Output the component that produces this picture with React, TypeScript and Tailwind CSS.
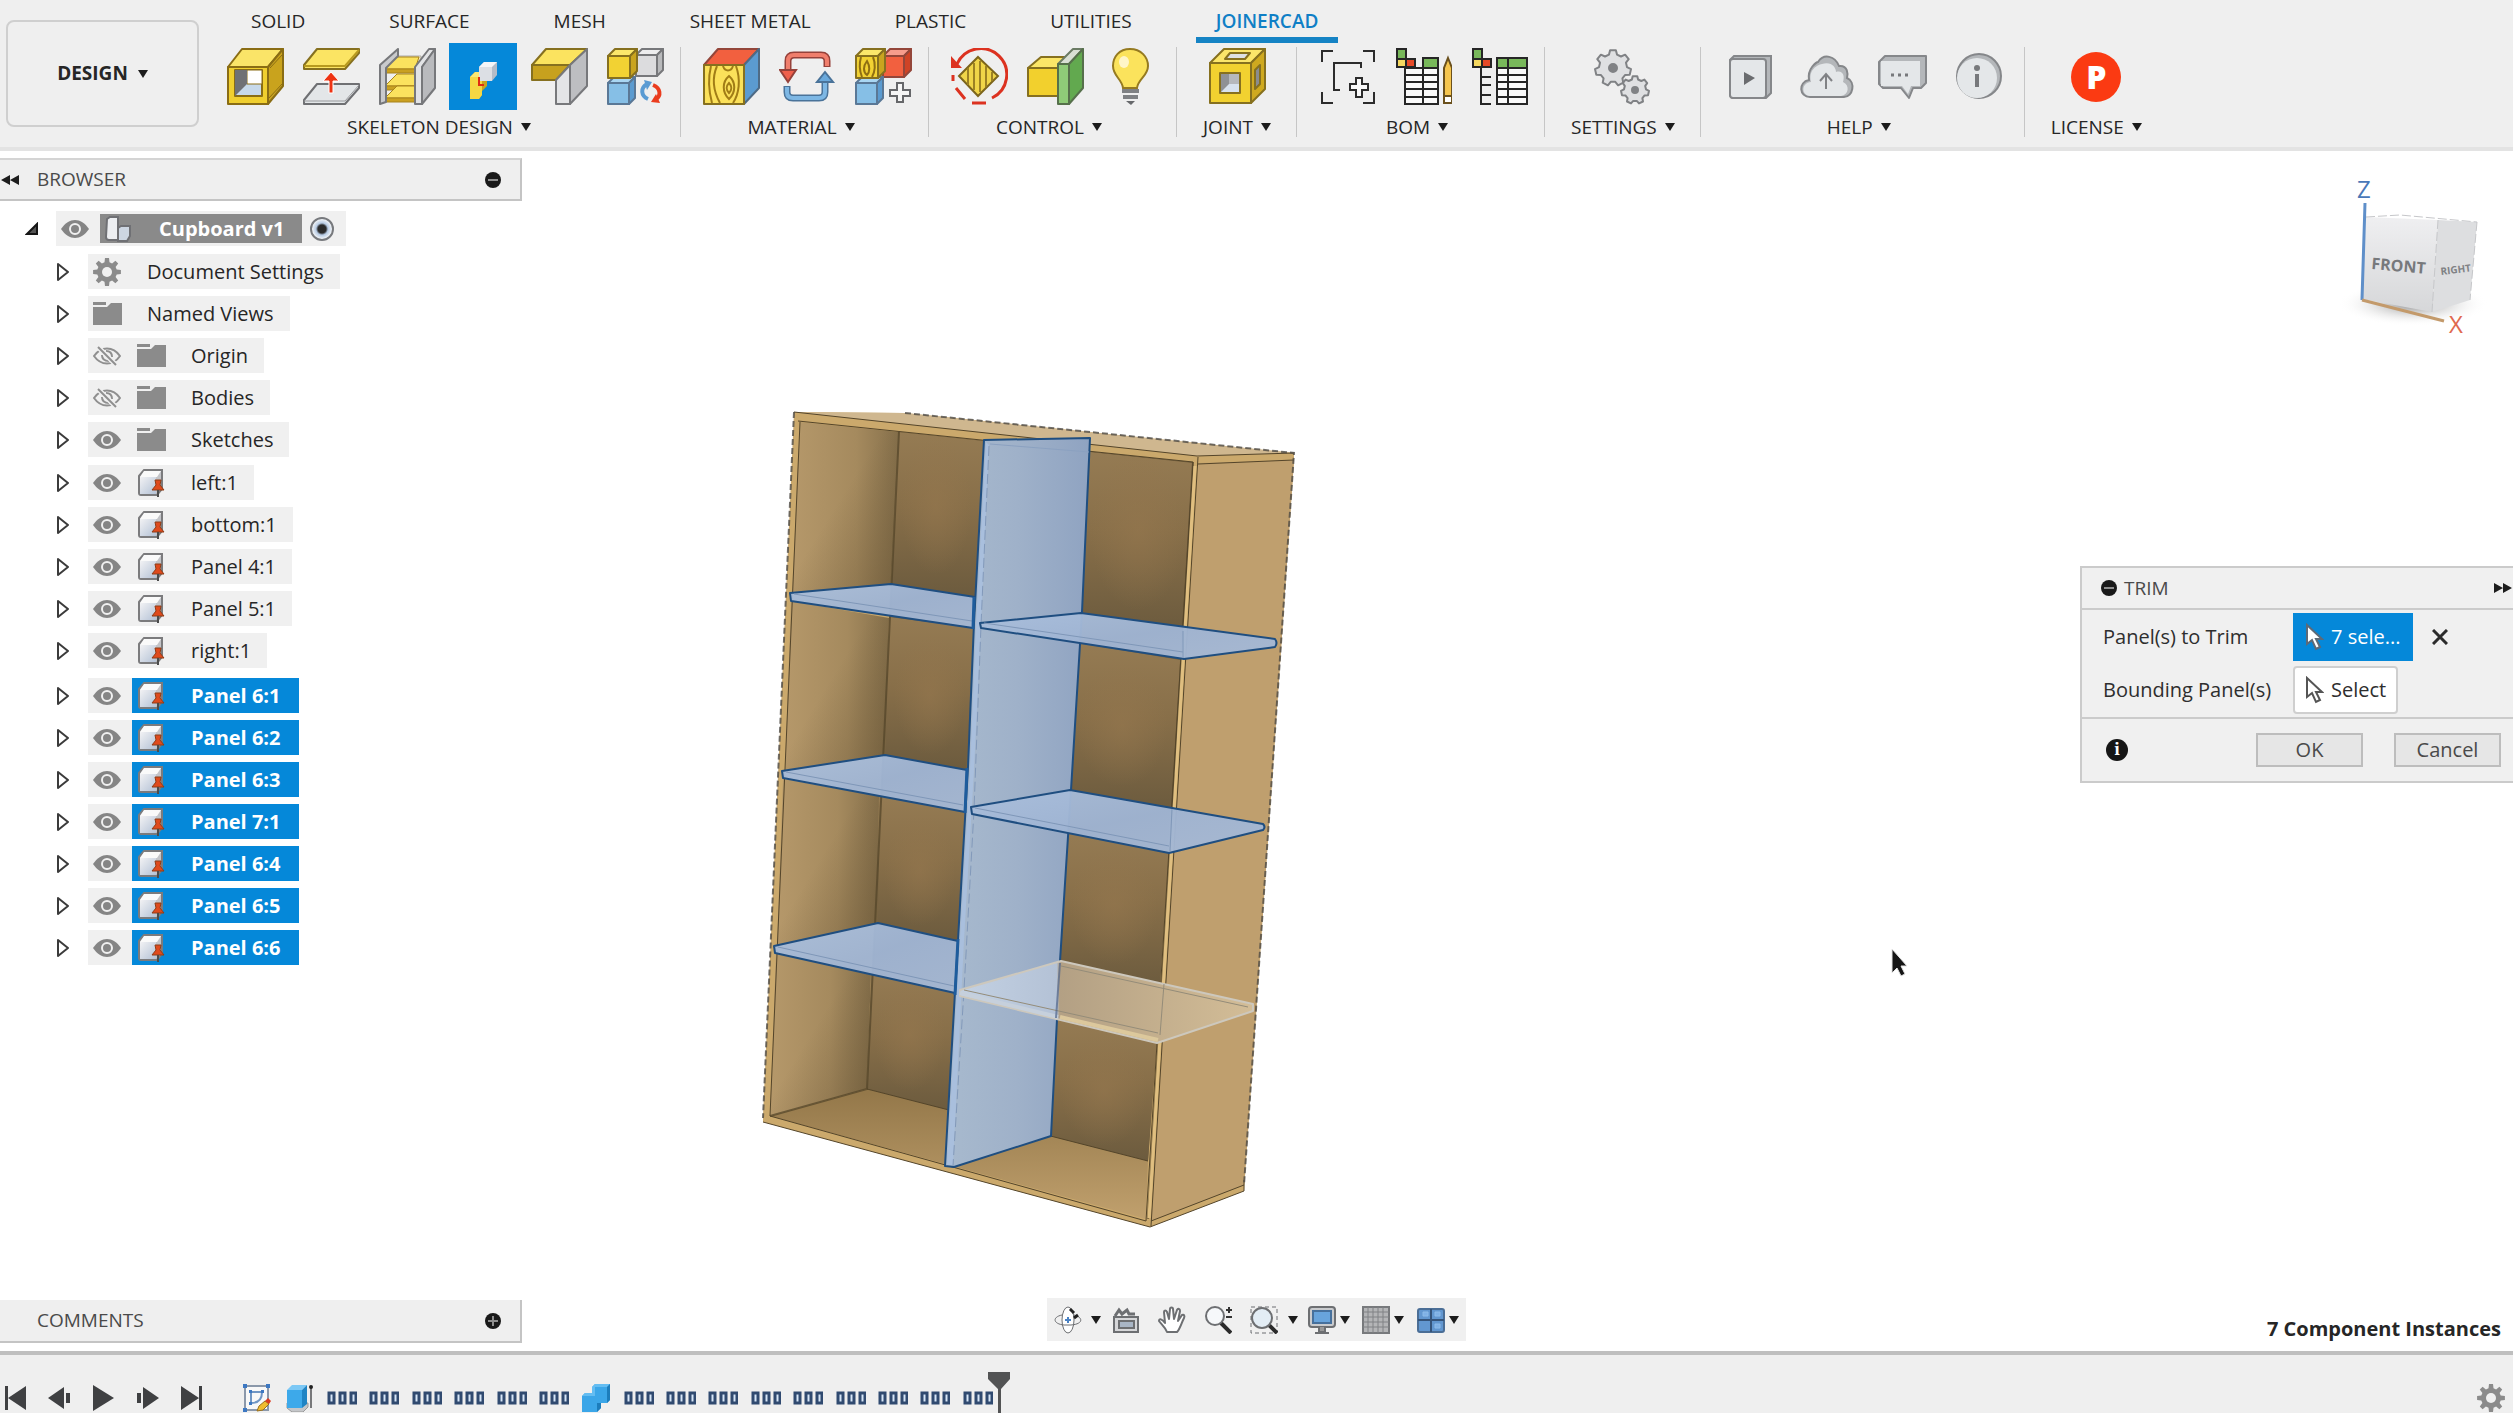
import type { ReactNode } from "react";

import clsx from "clsx";

/* ---------- shared drawing pieces ---------- */

interface CubeProps {
  x: number;
  y: number;
  size: number;
  depth: number;
  front: string;
  top: string;
  side: string;
  stroke: string;
}

const Cube = ({ x, y, size, depth, front, top, side, stroke }: CubeProps) => {
  const w = size - depth;
  return (
    <g stroke={stroke} strokeWidth="2" strokeLinejoin="round">
      <path d={`M${x} ${y + depth}L${x + depth} ${y}H${x + size}L${x + w} ${y + depth}Z`} fill={top} />
      <path d={`M${x + w} ${y + depth}L${x + size} ${y}V${y + w}L${x + w} ${y + size}Z`} fill={side} />
      <path d={`M${x} ${y + depth}H${x + w}V${y + size}H${x}Z`} fill={front} />
    </g>
  );
};

const YELLOW = { front: "#f2d233", top: "#fbe76b", side: "#c9a41f", stroke: "#86701f" };
const GRAY = { front: "#dcdcde", top: "#ededee", side: "#b9babc", stroke: "#77787b" };
const BLUE = { front: "#86bfe6", top: "#a9d6f2", side: "#5b9bd0", stroke: "#5a7896" };
const RED = { front: "#f2603f", top: "#f79c8c", side: "#cf4326", stroke: "#94463a" };

const Tool = ({ children }: { children: ReactNode }) => (
  <svg viewBox="0 0 57 57" className="size-[57px]" fill="none">
    {children}
  </svg>
);

const Caret = () => (
  <svg viewBox="0 0 10 8" className="h-2 w-[10px] shrink-0" fill="#1c1c1c">
    <path d="M0 0h10L5 8z" />
  </svg>
);

/* ---------- toolbar icons ---------- */

const BoxIcon = () => (
  <Tool>
    <g stroke="#8a6d14" strokeWidth="2" strokeLinejoin="round">
      <path d="M1 19L15 1H56L41 19Z" fill="#fae468" />
      <path d="M41 19L56 1V38L41 56Z" fill="#c9a31d" />
      <path d="M1 19H41V56H1Z" fill="#f0cf2f" />
      <path d="M8 22H35V48H8Z" fill="#c7d9ea" />
      <path d="M20 22H35V36H20Z" fill="#fff" strokeWidth="1" />
    </g>
    <path d="M8 48L20 36V22H8Z" fill="#6f7175" />
    <path d="M42 50L55 36M43 20L55 7" stroke="#8a6d14" strokeWidth="1" />
  </Tool>
);

const OffsetIcon = () => (
  <Tool>
    <path d="M14 1H56V5L42 21H1V17Z" fill="#fbe463" stroke="#86701f" strokeWidth="2" strokeLinejoin="round" />
    <path d="M1 18H42L56 2" stroke="#b89a1e" strokeWidth="2" />
    <path d="M14 36H56V40L42 56H1V52Z" fill="#e3e6e8" stroke="#6f7073" strokeWidth="2" strokeLinejoin="round" />
    <path d="M1 53H42L56 37" stroke="#98999c" strokeWidth="1" />
    <path d="M26 45V33H20L28 24L36 33H30V45Z" fill="#ee3313" stroke="#fff" strokeWidth="1" />
  </Tool>
);

const ShelvesIcon = () => (
  <Tool>
    <path d="M18 8H42V14H18Z" fill="#f2e7c0" stroke="#aaa" />
    {[9, 26, 38].map((y) => (
      <g key={y} stroke="#a8831c" strokeWidth="1" strokeLinejoin="round">
        <path d={`M6 ${y + 12}L18 ${y}H40L36 ${y + 12}Z`} fill="#fbe25e" />
        <path d={`M6 ${y + 12}H36V${y + 16}H6Z`} fill="#caa021" />
      </g>
    ))}
    <g stroke="#77787b" strokeWidth="2" strokeLinejoin="round">
      <path d="M1 17L19 1V8L7 20V54L1 56Z" fill="#c9cacd" />
      <path d="M36 19L50 1H56L43 19V56H36Z" fill="#e2e3e5" />
      <path d="M43 19L56 1V40L43 56Z" fill="#b9babd" />
    </g>
  </Tool>
);

const TrimIcon = () => (
  <Tool>
    <path d="M15 29L20 24H32V38L27 43V47L24 51H15Z" fill="#c9a31d" />
    <path d="M15 29H27V47L24 51H15Z" fill="#f5d743" />
    <path d="M15 29L20 24H32L27 29Z" fill="#fbe873" />
    <path d="M24 19L29 14H42V27L37 33H24Z" fill="#b3bcc8" />
    <path d="M24 19H37V33H24Z" fill="#dcdfe4" />
    <path d="M24 19L29 14H42L37 19Z" fill="#f4f5f7" />
    <path d="M24 29V37H29" stroke="#e02b12" strokeWidth="2" />
  </Tool>
);

const CornerIcon = () => (
  <Tool>
    <g strokeWidth="2" strokeLinejoin="round">
      <path d="M1 17L15 1H56L39 17Z" fill="#fbe35f" stroke="#86701f" />
      <path d="M1 17H39L25 32H1Z" fill="#c7a11e" stroke="#86701f" />
      <path d="M25 32L39 17V56H25Z" fill="#e3e4e6" stroke="#77787b" />
      <path d="M39 17L56 1V38L39 56Z" fill="#bdbec1" stroke="#77787b" />
    </g>
  </Tool>
);

const ReplaceIcon = () => (
  <Tool>
    <Cube x={29} y={1} size={27} depth={6} {...GRAY} />
    <Cube x={1} y={29} size={27} depth={6} {...BLUE} />
    <Cube x={1} y={1} size={29} depth={7} {...YELLOW} />
    <path d="M41 51C34 48 33 40 40 36" stroke="#5a9bd3" strokeWidth="4" />
    <path d="M37 32L45 34L40 42Z" fill="#5a9bd3" />
    <path d="M46 37C54 40 54 48 49 51" stroke="#ea3c1e" strokeWidth="4" />
    <path d="M53 55L44 54L49 46Z" fill="#ea3c1e" />
  </Tool>
);

const WoodIcon = () => (
  <Tool>
    <g strokeWidth="2" strokeLinejoin="round">
      <path d="M1 17L15 1H56L41 17Z" fill="#f2603f" stroke="#94463a" />
      <path d="M41 17L56 1V40L41 56Z" fill="#5b9bd0" stroke="#4f6b85" />
      <path d="M1 17H41V56H1Z" fill="#fbe15a" stroke="#86701f" />
    </g>
    <g stroke="#a17d16" strokeWidth="2">
      <path d="M8 18C5 30 6 44 9 55M14 18C8 32 12 46 17 55M33 18C38 32 36 46 30 55M20 18C22 24 28 24 30 18" />
      <path d="M26 28C19 34 19 44 26 51C33 44 33 34 26 28Z" />
      <path d="M26 35C23 38 23 42 26 45C29 42 29 38 26 35Z" />
    </g>
  </Tool>
);

const SwapIcon = () => (
  <Tool>
    <path d="M48 19V13Q48 7 42 7H15Q9 7 9 13V22" stroke="#96413a" strokeWidth="7" />
    <path d="M48 18V13Q48 7 42 7H15Q9 7 9 13V22" stroke="#f07e6c" strokeWidth="4" />
    <path d="M1 22H17L9 34Z" fill="#f0604c" stroke="#96413a" strokeWidth="2" />
    <path d="M8 38V44Q8 50 14 50H40Q46 50 46 44V34" stroke="#4a7399" strokeWidth="7" />
    <path d="M8 39V44Q8 50 14 50H40Q46 50 46 44V34" stroke="#7db7e4" strokeWidth="4" />
    <path d="M38 34H54L46 24Z" fill="#6aa9dc" stroke="#4a7399" strokeWidth="2" />
  </Tool>
);

const AddMaterialIcon = () => (
  <Tool>
    <Cube x={28} y={1} size={28} depth={7} {...RED} />
    <Cube x={1} y={29} size={27} depth={6} {...BLUE} />
    <Cube x={1} y={1} size={29} depth={7} {...YELLOW} />
    <path d="M6 9C4 16 5 24 7 29M18 9C21 16 20 24 17 29M12 13C8 18 8 24 12 27C15 24 15 18 12 13Z" stroke="#8f6f12" strokeWidth="2" />
    <path d="M42 35H48V42H55V48H48V54H42V48H35V42H42Z" fill="#f6f6f6" stroke="#66676a" strokeWidth="2" />
  </Tool>
);

const RotateGrainIcon = () => (
  <Tool>
    <path d="M6 16A26 26 0 1 1 41 50" stroke="#dc3220" strokeWidth="3" />
    <path d="M35 55H21M14 51L5 40M2 33V27" stroke="#dc3220" strokeWidth="3" />
    <path d="M0 8V20H11Z" fill="#dc3220" />
    <path d="M27 9L47 28L27 48L8 28Z" fill="#f0d548" stroke="#7c651b" strokeWidth="2" />
    <path d="M17 20V37M23 15V42M29 13V44M35 18V39M41 24V33" stroke="#9c8123" strokeWidth="2" />
  </Tool>
);

const ControlIcon = () => (
  <Tool>
    <g strokeWidth="2" strokeLinejoin="round">
      <path d="M1 20L14 9H38L32 20Z" fill="#fbe668" stroke="#86701f" />
      <path d="M1 20H32V48H1Z" fill="#f2d02d" stroke="#86701f" />
      <path d="M31 16L46 1H56L42 16Z" fill="#d9dfd4" stroke="#6b7b64" />
      <path d="M31 16H42V56H31Z" fill="#8fcb78" stroke="#56704b" />
      <path d="M42 16L56 1V40L42 56Z" fill="#62a94f" stroke="#56704b" />
    </g>
  </Tool>
);

const BulbIcon = () => (
  <Tool>
    <path d="M27 1C16 1 10 9 10 18C10 28 19 31 20 40H34C35 31 45 28 45 18C45 9 38 1 27 1Z" fill="#fbe35c" stroke="#957a20" strokeWidth="2" />
    <ellipse cx="21" cy="14" rx="5" ry="6" fill="#fff6c8" />
    <path d="M19 43H36M20 49H35" stroke="#7f8184" strokeWidth="4" />
    <path d="M23 53H32L28 57Z" fill="#66686b" />
  </Tool>
);

const JointIcon = () => (
  <Tool>
    <g stroke="#86701f" strokeWidth="2" strokeLinejoin="round">
      <path d="M1 15L15 1H56L42 15Z" fill="#fbe56a" />
      <path d="M42 15L56 1V41L42 55Z" fill="#cfa91f" />
      <path d="M1 15H42V55H1Z" fill="#f2d130" />
      <path d="M21 5H41L36 11H16Z" fill="#dfe0e2" />
      <path d="M46 22L51 17V36L46 41Z" fill="#8b8c8f" />
      <path d="M11 25H31V45H11Z" fill="#d8e2ee" />
    </g>
    <path d="M12 26H20V36L12 44Z" fill="#8f9195" />
    <path d="M20 26H30V36H20Z" fill="#b6b8bc" />
  </Tool>
);

const CaptureIcon = () => (
  <Tool>
    <g stroke="#2c2c2c" strokeWidth="2">
      <path d="M3 14V3H14M44 3H55V14M3 44V55H14M44 55H55V44" />
      <path d="M42 20V15H15V42H21" />
      <path d="M37 30H43V36H49V42H43V49H37V42H31V36H37Z" fill="#fafafa" />
    </g>
  </Tool>
);

const TableArt = ({ wide }: { wide: boolean }) => (
  <g stroke="#262626" strokeWidth="2">
    <path d="M2 1H11V11H2Z" fill="#78b85a" />
    <path d="M2 11H11V19H2Z" fill="#f5d860" />
    <path d="M11 11H20V19H11Z" fill="#e64a28" />
    {wide ? (
      <>
        <path d="M10 20V56H20M10 29H20M10 37H20M10 47H20" />
        <path d="M26 10H56V56H26Z" fill="#fafafa" />
        <path d="M26 10H56V20H26Z" fill="#78b85a" />
        <path d="M26 27H56M26 34H56M26 41H56M26 49H56M37 10V56" />
      </>
    ) : (
      <>
        <path d="M10 20H28V56H10Z" fill="#fafafa" />
        <path d="M28 10H43V56H28Z" fill="#fafafa" />
        <path d="M28 10H43V20H28Z" fill="#78b85a" />
        <path d="M10 27H43M10 34H43M10 41H43M10 49H43" />
        <path d="M53 10L57 20V55H49V20Z" fill="#f5c54e" stroke="#6a501c" />
        <path d="M49 48H57V55H49Z" fill="#fff" stroke="#6a501c" />
      </>
    )}
  </g>
);

const TableEditIcon = () => (
  <Tool>
    <TableArt wide={false} />
  </Tool>
);

const TableIcon = () => (
  <Tool>
    <TableArt wide />
  </Tool>
);

const cogPath = (cx: number, cy: number, outer: number, inner: number, teeth: number) => {
  const points: string[] = [];
  for (let i = 0; i < teeth; i++) {
    [-0.32, -0.18, 0.18, 0.32].forEach((offset, n) => {
      const angle = ((i + offset) / teeth) * Math.PI * 2 - Math.PI / 2;
      const r = n === 0 || n === 3 ? inner : outer;
      points.push(`${(cx + Math.cos(angle) * r).toFixed(1)} ${(cy + Math.sin(angle) * r).toFixed(1)}`);
    });
  }
  return `M${points.join("L")}Z`;
};

const CogsIcon = () => (
  <Tool>
    <g fill="#dfe0e2" stroke="#808285" strokeWidth="2" strokeLinejoin="round">
      <path d={cogPath(19, 20, 18, 14, 7)} />
      <circle cx="19" cy="20" r="4" fill="#808285" />
      <path d={cogPath(41, 42, 14, 11, 7)} />
      <circle cx="41" cy="42" r="3" fill="#808285" />
    </g>
  </Tool>
);

const PlayIcon = () => (
  <Tool>
    <path d="M12 8H49V45L44 50H12Q8 50 8 46V12Z" fill="#b4b7ba" stroke="#85878a" strokeWidth="2" />
    <rect x="8" y="11" width="36" height="39" rx="3" fill="#e4e7e9" stroke="#85878a" strokeWidth="2" />
    <path d="M22 24V37L33 30Z" fill="#6a6c6f" />
  </Tool>
);

const CloudIcon = () => (
  <Tool>
    <path d="M12 49C1 49 0 34 11 32C9 20 19 14 20 14C26 5 37 8 41 18C50 17 50 26 49 30C58 34 55 49 46 49Z" fill="#b4b7ba" stroke="#85878a" strokeWidth="2" />
    <path d="M12 48C3 47 3 35 13 34C10 22 19 17 24 16C33 13 38 19 38 24C45 22 47 28 45 34C52 37 51 47 43 48Z" fill="#e4e7e9" />
    <path d="M28 41V27M22 33L28 26L34 33" stroke="#808285" strokeWidth="2" />
  </Tool>
);

const ChatIcon = () => (
  <Tool>
    <path d="M11 8H52V35L47 40H39L35 50L27 40H9L5 36V14Z" fill="#b4b7ba" stroke="#85878a" strokeWidth="2" strokeLinejoin="round" />
    <path d="M7 13H46V38H37L34 46L28 38H7Z" fill="#e4e7e9" />
    <path d="M17 27H20M24 27H27M31 27H34" stroke="#77797c" strokeWidth="3" />
  </Tool>
);

const InfoIcon = () => (
  <Tool>
    <circle cx="29" cy="28" r="22" fill="#b4b7ba" stroke="#85878a" strokeWidth="2" />
    <circle cx="27" cy="30" r="20" fill="#e4e7e9" />
    <path d="M27 26V39" stroke="#77797c" strokeWidth="4" />
    <circle cx="27" cy="20" r="3" fill="#77797c" />
  </Tool>
);

const LicenseIcon = () => (
  <span className="flex size-[50px] items-center justify-center rounded-full bg-[#fb3a12] text-[32px] leading-none font-extrabold text-white">
    P
  </span>
);

/* ---------- toolbar ---------- */

const TABS = ["SOLID", "SURFACE", "MESH", "SHEET METAL", "PLASTIC", "UTILITIES", "JOINERCAD"];

interface ToolGroup {
  label: string;
  tools: { name: string; icon: ReactNode }[];
}

const GROUPS: ToolGroup[] = [
  {
    label: "SKELETON DESIGN",
    tools: [
      { name: "Box", icon: <BoxIcon /> },
      { name: "Offset", icon: <OffsetIcon /> },
      { name: "Shelves", icon: <ShelvesIcon /> },
      { name: "Trim", icon: <TrimIcon /> },
      { name: "Corner", icon: <CornerIcon /> },
      { name: "Replace", icon: <ReplaceIcon /> },
    ],
  },
  {
    label: "MATERIAL",
    tools: [
      { name: "Wood", icon: <WoodIcon /> },
      { name: "Swap", icon: <SwapIcon /> },
      { name: "Add material", icon: <AddMaterialIcon /> },
    ],
  },
  {
    label: "CONTROL",
    tools: [
      { name: "Grain", icon: <RotateGrainIcon /> },
      { name: "Side", icon: <ControlIcon /> },
      { name: "Hint", icon: <BulbIcon /> },
    ],
  },
  { label: "JOINT", tools: [{ name: "Joint", icon: <JointIcon /> }] },
  {
    label: "BOM",
    tools: [
      { name: "Capture", icon: <CaptureIcon /> },
      { name: "Edit table", icon: <TableEditIcon /> },
      { name: "Table", icon: <TableIcon /> },
    ],
  },
  { label: "SETTINGS", tools: [{ name: "Settings", icon: <CogsIcon /> }] },
  {
    label: "HELP",
    tools: [
      { name: "Video", icon: <PlayIcon /> },
      { name: "Upload", icon: <CloudIcon /> },
      { name: "Feedback", icon: <ChatIcon /> },
      { name: "About", icon: <InfoIcon /> },
    ],
  },
  { label: "LICENSE", tools: [{ name: "License", icon: <LicenseIcon /> }] },
];

const ToolbarGroup = ({ label, tools }: ToolGroup) => {
  const single = tools.length === 1;
  return (
    <section
      className={clsx(
        "relative flex flex-col items-center after:absolute after:top-1 after:right-0 after:h-[90px] after:w-px after:bg-[#c6c6c6] last:after:hidden",
        single ? "px-[26px]" : "pr-3 pl-4",
      )}
    >
      <div className="flex gap-2">
        {tools.map(({ name, icon }) => (
          <button
            key={name}
            aria-label={name}
            className={clsx(
              "flex h-[67px] w-[68px] items-center justify-center",
              name === "Trim" && "bg-[#0588d9]",
            )}
          >
            {icon}
          </button>
        ))}
      </div>
      <button className={clsx("flex h-[34px] items-center gap-2 text-[19px] font-medium", !single && "mr-3")}>
        {label}
        <Caret />
      </button>
    </section>
  );
};

const Toolbar = () => (
  <header className="border-b-4 border-[#e3e3e3] bg-[#efefef]">
    <div className="flex h-[147px] gap-[6px] pl-[6px]">
      <button className="my-5 flex w-[193px] shrink-0 items-center justify-center gap-[10px] rounded-lg border-2 border-[#cfcfcf] text-[19px] font-bold">
        DESIGN
        <Caret />
      </button>
      <div>
        <nav className="flex h-[43px] items-center gap-[84px] pl-[46px] text-[19px] leading-[41px] font-medium">
          {TABS.map((tab) => (
            <a
              key={tab}
              href="#"
              className={clsx(
                "relative",
                tab === "JOINERCAD" &&
                  "font-semibold text-[#0f7fc6] after:absolute after:-inset-x-5 after:-bottom-px after:h-[6px] after:bg-[#1583c4]",
              )}
            >
              {tab}
            </a>
          ))}
        </nav>
        <div className="flex">
          {GROUPS.map((group) => (
            <ToolbarGroup key={group.label} {...group} />
          ))}
        </div>
      </div>
    </div>
  </header>
);

/* ---------- browser tree ---------- */

const Dot = ({ sign }: { sign: "minus" | "plus" }) => (
  <svg viewBox="0 0 16 16" className="size-4">
    <circle cx="8" cy="8" r="8" fill="#191919" />
    <path d={sign === "plus" ? "M3 8h10M8 3v10" : "M3 8h10"} stroke="#8d8d8d" strokeWidth="2" />
  </svg>
);

const Eye = () => (
  <svg viewBox="0 0 28 18" className="h-[18px] w-7">
    <path d="M0 9C8-3 20-3 28 9C20 21 8 21 0 9Z" fill="#858585" />
    <circle cx="14" cy="9" r="5" fill="#858585" stroke="#f0f0f0" strokeWidth="2" />
  </svg>
);

const EyeOff = () => (
  <svg viewBox="0 0 28 20" className="h-5 w-7" fill="none" stroke="#8f8f8f" strokeWidth="2">
    <path d="M1 10C8 0 20 0 27 10C20 20 8 20 1 10ZM9 9C9 15 14 15 16 15M13 5C18 5 19 8 19 11" />
    <path d="M5 1L23 19" stroke="#f0f0f0" strokeWidth="5" />
    <path d="M5 1L23 19" />
  </svg>
);

const Folder = () => (
  <svg viewBox="0 0 29 23" className="h-[23px] w-[29px]" fill="#8b8b8b">
    <path d="M0 0H13V3H0ZM0 5H14L18 1H29V23H0Z" />
  </svg>
);

const Cog = () => (
  <svg viewBox="0 0 28 28" className="size-7" fill="none">
    <path d={cogPath(14, 14, 14, 10, 8)} fill="#8b8b8b" />
    <circle cx="14" cy="14" r="5" fill="#f0f0f0" />
  </svg>
);

const Component = () => (
  <svg viewBox="0 0 28 28" className="size-7">
    <defs>
      <linearGradient id="body" x1="0" y1="0" x2="1" y2="1">
        <stop offset="0" stopColor="#f2f2f4" />
        <stop offset="1" stopColor="#b4c2d6" />
      </linearGradient>
    </defs>
    <path d="M2 7L7 1H25V20L20 26H4Q2 26 2 24Z" fill="#c3c4c8" stroke="#7b7b7d" strokeWidth="2" />
    <path d="M3 8L7 2H24L20 8Z" fill="#fafafa" />
    <rect x="3" y="8" width="16" height="17" fill="url(#body)" />
    <path d="M18 11H24L23 16L27 21H15L19 16Z" fill="#df4a1d" stroke="#8e3c16" />
    <path d="M21 21V28" stroke="#4c4c4c" strokeWidth="2" />
  </svg>
);

const Assembly = () => (
  <svg viewBox="0 0 26 26" className="size-[26px]" stroke="#6f7074" strokeWidth="2">
    <path d="M2 3L5 1H13V24H4Q1 24 1 21Z" fill="#eceef1" />
    <path d="M13 12L16 10H25V20L22 25H13Z" fill="#cdd6e2" />
  </svg>
);

type Kind = "settings" | "folder" | "hidden" | "shown" | "component" | "selected";

const SECTIONS: { label: string; kind: Kind }[][] = [
  [
    { label: "Document Settings", kind: "settings" },
    { label: "Named Views", kind: "folder" },
    { label: "Origin", kind: "hidden" },
    { label: "Bodies", kind: "hidden" },
    { label: "Sketches", kind: "shown" },
  ],
  [
    { label: "left:1", kind: "component" },
    { label: "bottom:1", kind: "component" },
    { label: "Panel 4:1", kind: "component" },
    { label: "Panel 5:1", kind: "component" },
    { label: "right:1", kind: "component" },
  ],
  [
    { label: "Panel 6:1", kind: "selected" },
    { label: "Panel 6:2", kind: "selected" },
    { label: "Panel 6:3", kind: "selected" },
    { label: "Panel 7:1", kind: "selected" },
    { label: "Panel 6:4", kind: "selected" },
    { label: "Panel 6:5", kind: "selected" },
    { label: "Panel 6:6", kind: "selected" },
  ],
];

const Slot = ({ children }: { children: ReactNode }) => (
  <span className="flex w-11 shrink-0 items-center pl-[5px]">{children}</span>
);

const TreeRow = ({ label, kind }: { label: string; kind: Kind }) => {
  const selected = kind === "selected";
  return (
    <li className="flex items-center">
      <button aria-label={`Expand ${label}`} className="mr-[18px] ml-[57px]">
        <svg viewBox="0 0 13 18" className="h-[18px] w-[13px]" fill="#fff" stroke="#3b3b3b" strokeWidth="2">
          <path d="M1 1L11 9L1 17Z" strokeLinejoin="round" />
        </svg>
      </button>
      <div className="flex h-[35px] bg-[#f0f0f0]">
        {kind === "hidden" && (
          <Slot>
            <EyeOff />
          </Slot>
        )}
        {(kind === "shown" || kind === "component" || selected) && (
          <Slot>
            <Eye />
          </Slot>
        )}
        <div className={clsx("flex items-center", selected ? "bg-[#0588d9] pr-[19px] font-bold text-white" : "pr-4")}>
          <Slot>
            {kind === "settings" && <Cog />}
            {(kind === "folder" || kind === "hidden" || kind === "shown") && <Folder />}
            {(kind === "component" || selected) && <Component />}
          </Slot>
          <span className="pl-[15px]">{label}</span>
        </div>
      </div>
    </li>
  );
};

const Browser = () => (
  <aside className="w-[522px]">
    <div className="flex h-[43px] items-center border-y-2 border-r-2 border-t-[#d4d4d4] border-r-[#c4c4c4] border-b-[#c4c4c4] bg-[#efefef]">
      <button aria-label="Collapse browser">
        <svg viewBox="0 0 19 10" className="h-[10px] w-[19px]" fill="#1d1d1d">
          <path d="M1 5L10 0V10ZM10 5L19 0V10Z" />
        </svg>
      </button>
      <h2 className="pl-[18px] text-[19px] text-[#4a4a4a]">BROWSER</h2>
      <button aria-label="Minimize browser" className="mr-[19px] ml-auto">
        <Dot sign="minus" />
      </button>
    </div>
    <div className="mt-[10px] flex flex-col gap-2 text-[20px] leading-[35px] font-medium">
      <div className="flex items-center">
        <svg viewBox="0 0 13 13" className="mr-[18px] ml-[25px] size-[13px]" fill="#555" stroke="#161616" strokeWidth="2">
          <path d="M12 2V12H2Z" />
        </svg>
        <div className="flex h-[35px] items-center bg-[#f0f0f0]">
          <Slot>
            <Eye />
          </Slot>
          <div className="flex h-[29px] items-center bg-[#8a8a8a] pr-[18px] font-bold text-white">
            <Slot>
              <Assembly />
            </Slot>
            <label htmlFor="active" className="pl-[15px]">
              Cupboard v1
            </label>
          </div>
          <input
            id="active"
            type="radio"
            defaultChecked
            className="mr-3 ml-2 size-6 appearance-none rounded-full border-2 border-[#77797d] bg-[radial-gradient(circle,#2b2b2b_4px,#b7cbe4_6px,#f4f6f8_10px)]"
          />
        </div>
      </div>
      {SECTIONS.map((rows) => (
        <ul key={rows[0].label} className="flex flex-col gap-[7px] last:pt-0.5">
          {rows.map((row) => (
            <TreeRow key={row.label} {...row} />
          ))}
        </ul>
      ))}
    </div>
  </aside>
);

/* ---------- canvas ---------- */

const Shelf = ({ top, edge }: { top: string; edge: string }) => (
  <g strokeLinejoin="round">
    <path d={top} fill="url(#shelf)" fillOpacity="0.96" stroke="#1f4e80" strokeWidth="2" />
    <path d={edge} fill="none" stroke="#7f97b8" strokeWidth="1" />
  </g>
);

const Cabinet = () => (
  <svg viewBox="0 0 600 860" className="absolute top-[239px] left-[740px] h-[860px] w-[600px]" fill="none">
    <defs>
      <linearGradient id="wall" x1="0" y1="0" x2="1" y2="0">
        <stop offset="0" stopColor="#b5986a" />
        <stop offset="0.6" stopColor="#a58a5e" />
        <stop offset="1" stopColor="#86704b" />
      </linearGradient>
      <linearGradient id="back" x1="0" y1="0" x2="0" y2="1">
        <stop offset="0" stopColor="#957b53" />
        <stop offset="0.45" stopColor="#886f49" />
        <stop offset="1" stopColor="#6c5b3e" />
      </linearGradient>
      <radialGradient id="glow">
        <stop offset="0" stopColor="#95774e" stopOpacity="0.6" />
        <stop offset="1" stopColor="#95774e" stopOpacity="0" />
      </radialGradient>
      <linearGradient id="shade" x1="0" y1="0" x2="1" y2="1">
        <stop offset="0.45" stopColor="#5b4a2e" stopOpacity="0" />
        <stop offset="1" stopColor="#5b4a2e" stopOpacity="0.45" />
      </linearGradient>
      <linearGradient id="shelf" x1="0" y1="0" x2="1" y2="1">
        <stop offset="0" stopColor="#a9bedb" />
        <stop offset="0.5" stopColor="#9fb4d3" />
        <stop offset="1" stopColor="#a6b9d5" />
      </linearGradient>
      <linearGradient id="divider" x1="0" y1="0" x2="1" y2="0">
        <stop offset="0" stopColor="#a8bace" />
        <stop offset="0.5" stopColor="#9fb1c9" />
        <stop offset="1" stopColor="#8fa3c1" />
      </linearGradient>
      <linearGradient id="floor" x1="0" y1="0" x2="0" y2="1">
        <stop offset="0" stopColor="#937749" />
        <stop offset="1" stopColor="#c0a06d" />
      </linearGradient>
      <linearGradient id="ghost" x1="0" y1="0" x2="1" y2="0">
        <stop offset="0" stopColor="#c3d1e3" />
        <stop offset="0.33" stopColor="#b4c2d6" />
        <stop offset="0.34" stopColor="#b3a084" />
        <stop offset="0.7" stopColor="#c5b08e" />
        <stop offset="1" stopColor="#d3bd97" />
      </linearGradient>
    </defs>

    {/* carcass */}
    <path d="M54 22L165 23L554 63V70L504 801L410 837L23 732V726Z" fill="#cba96c" />
    <path d="M54 22L165 23L554 63L457 66Z" fill="#cfb78f" />
    <path d="M458 73L554 70L504 795L411 831Z" fill="#bf9f6e" />
    <path d="M159 42L453 72L408 771L127 699Z" fill="#75613f" />

    {/* compartment backs */}
    <path d="M159 42L244 51L235 207L151 194Z" fill="url(#back)" />
    <path d="M350 62L453 73L445 240L342 222Z" fill="url(#back)" />
    <path d="M149 227L234 238L226 380L145 365Z" fill="url(#back)" />
    <path d="M338 253L440 270L434 420L331 400Z" fill="url(#back)" />
    <path d="M139 406L225 422L217 551L138 533Z" fill="url(#back)" />
    <path d="M328 442L429 463L420 597L321 571Z" fill="url(#back)" />
    <path d="M131 582L215 603L207 720L127 699Z" fill="url(#back)" />
    <path d="M317 628L417 653L408 771L311 747Z" fill="url(#back)" />
    <ellipse cx="196" cy="115" rx="36" ry="70" fill="url(#glow)" />
    <ellipse cx="398" cy="140" rx="48" ry="80" fill="url(#glow)" />
    <ellipse cx="190" cy="305" rx="36" ry="60" fill="url(#glow)" />
    <ellipse cx="382" cy="335" rx="46" ry="62" fill="url(#glow)" />
    <ellipse cx="180" cy="480" rx="36" ry="56" fill="url(#glow)" />
    <ellipse cx="374" cy="515" rx="44" ry="60" fill="url(#glow)" />
    <ellipse cx="170" cy="645" rx="36" ry="56" fill="url(#glow)" />
    <ellipse cx="364" cy="700" rx="44" ry="56" fill="url(#glow)" />

    {/* left wall, one slice per compartment */}
    {["M60 32L159 42L151 194L52 203Z", "M51 211L149 228L145 365L45 381Z", "M43 389L139 406L138 533L37 556Z", "M36 563L131 582L127 699L30 726Z"].map(
      (d) => (
        <g key={d}>
          <path d={d} fill="url(#wall)" />
          <path d={d} fill="url(#shade)" />
        </g>
      ),
    )}
    <path d="M30 726L127 699L408 771L406 829Z" fill="url(#floor)" />

    {/* edges */}
    <g stroke="#54452a" strokeWidth="1">
      <path d="M54 22L457 66L554 63M58 31L453 72M458 74L554 70" />
      <path d="M60 32L30 726L406 831L453 72M458 67L411 836M127 699L408 771M411 831L504 795" />
      <path d="M23 732L410 837L504 801V790" />
      <path d="M30 726L127 699L159 42" strokeWidth="2" strokeOpacity="0.75" />
      <path d="M453 72L408 829" strokeWidth="2" strokeOpacity="0.6" />
    </g>
    <g stroke="#4d4a44" strokeWidth="2" strokeDasharray="6 3">
      <path d="M165 23L554 63L504 795M54 22L23 728" strokeOpacity="0.8" />
    </g>
    <path d="M455 76L409 828" stroke="#e0bf80" strokeWidth="3" />

    {/* selected panels */}
    <path d="M244 50L350 48L342 222L331 400L320 571L311 746L214 777L205 776L218 550L228 377L234 233Z" fill="url(#divider)" stroke="#1f4e80" strokeWidth="2" strokeLinejoin="round" />
    <path d="M246 52L236 235L230 380L220 550L207 775L213 775L224 550L234 380L241 235L249 55Z" fill="#a9bfdd" />
    <path d="M249 56L241 235L234 420L224 600L213 776" stroke="#8299ba" strokeDasharray="10 4" />
    <path d="M250 54L349 62" stroke="#8ba1c0" />
    <Shelf top="M50 203L151 194L235 207L233 238L51 211Z" edge="M54 204L232 231" />
    <Shelf top="M42 381L145 365L227 380L225 422L43 388Z" edge="M46 382L223 415" />
    <Shelf top="M34 556L138 533L218 551L215 603L35 563Z" edge="M38 557L214 596" />
    <Shelf top="M240 233L341 223L535 249Q538 253 535 257L444 269L241 238Z" edge="M244 233L443 262M443 241V268" />
    <Shelf top="M231 417L330 400L523 434Q526 437 523 440L429 463L232 424Z" edge="M235 418L429 456M432 419L430 461" />
    <path d="M234 207L233 239M227 378L225 423M218 549L215 605" stroke="#1e5c9c" strokeWidth="3" />

    {/* shelf being removed */}
    <path d="M220 600L321 571L513 614V621L417 653L220 606Z" fill="url(#ghost)" stroke="#cdc8bd" strokeWidth="2" strokeLinejoin="round" />
    <path d="M220 603L318 627" stroke="#c6d0dc" strokeWidth="4" />
    <path d="M320 627L418 650" stroke="#dcc89c" strokeWidth="4" />
    <path d="M224 600L418 643M321 576L508 617M424 594L420 645" stroke="#948c79" />
    <path d="M320 573L316 628" stroke="#4e648a" strokeWidth="2" strokeOpacity="0.7" />
  </svg>
);

const Pointer = () => (
  <svg viewBox="0 0 20 32" className="absolute top-[797px] left-[1889px] h-8 w-5">
    <path d="M3 1V25L8 20L12 28L16 26L12 18H18Z" fill="#151515" stroke="#e4e4e4" strokeWidth="1" />
  </svg>
);

const ViewCube = () => (
  <svg viewBox="0 0 170 180" className="h-[180px] w-[170px]">
    <defs>
      <radialGradient id="shadow">
        <stop offset="0" stopColor="#8c8c8c" />
        <stop offset="1" stopColor="#fff" stopOpacity="0" />
      </radialGradient>
      <linearGradient id="cube" x1="0" y1="0" x2="0" y2="1">
        <stop offset="0" stopColor="#efeff1" />
        <stop offset="1" stopColor="#d6d7d9" />
      </linearGradient>
    </defs>
    <ellipse cx="85" cy="144" rx="75" ry="22" fill="url(#shadow)" />
    <path d="M38 57L110 60L104 152L34 139Z" fill="url(#cube)" />
    <path d="M110 60L149 62L142 140L104 152Z" fill="#dddee0" />
    <path d="M38 57L72 55L149 62M110 60L104 152M149 62L142 140" stroke="#c6c7ca" strokeDasharray="9 3" fill="none" />
    <path d="M37 43L34 140" stroke="#5f8fc9" strokeWidth="3" />
    <path d="M34 140L116 161" stroke="#c39a6b" strokeWidth="3" />
    <text x="29" y="38" fontSize="24" fill="#4a78b8">
      Z
    </text>
    <text x="121" y="173" fontSize="24" fill="#e0694f">
      X
    </text>
    <text x="43" y="109" fontSize="16" fontWeight="700" fill="#77797c" transform="rotate(5 43 109)">
      FRONT
    </text>
    <text x="113" y="115" fontSize="10" fontWeight="700" fill="#808285" transform="rotate(-7 113 115)">
      RIGHT
    </text>
  </svg>
);

const SelectArrow = ({ stroke }: { stroke: string }) => (
  <svg viewBox="0 0 18 28" className="h-7 w-[18px]" fill="#fff" stroke={stroke} strokeWidth="2">
    <path d="M1 2V21L6 17L10 26L14 24L10 16H16Z" />
  </svg>
);

const TrimDialog = () => (
  <section className="border-2 border-r-0 border-[#cbcbcb] bg-[#f0f0f0] text-[20px] text-[#2e2e2e]">
    <div className="flex h-[42px] items-center border-b-2 border-[#cbcbcb] pl-[19px]">
      <button aria-label="Minimize dialog">
        <Dot sign="minus" />
      </button>
      <h2 className="pl-[7px] text-[19px] text-[#4a4a4a]">TRIM</h2>
      <button aria-label="Dock dialog" className="ml-auto">
        <svg viewBox="0 0 19 10" className="h-[10px] w-[19px]" fill="#1d1d1d">
          <path d="M0 0L9 5L0 10ZM9 0L18 5L9 10Z" />
        </svg>
      </button>
    </div>
    <div className="grid grid-cols-[190px_auto_1fr] items-center gap-y-[5px] border-b-2 border-[#cbcbcb] py-[3px] pl-[21px] font-medium">
      <label htmlFor="trim">Panel(s) to Trim</label>
      <button id="trim" className="flex h-12 w-[120px] items-center gap-[7px] bg-[#0588d9] pl-[13px] text-white">
        <SelectArrow stroke="#5d6a78" />
        7 sele...
      </button>
      <button aria-label="Clear selection" className="ml-[19px] justify-self-start">
        <svg viewBox="0 0 16 16" className="size-4" stroke="#2b2b2b" strokeWidth="3">
          <path d="M1 1L15 15M15 1L1 15" />
        </svg>
      </button>
      <label htmlFor="bounding">Bounding Panel(s)</label>
      <button id="bounding" className="flex h-12 w-[105px] items-center gap-[7px] rounded-sm border-2 border-[#cfcfcf] bg-white pl-[11px]">
        <SelectArrow stroke="#555" />
        Select
      </button>
    </div>
    <div className="flex h-[62px] items-center pr-3 pl-6">
      <button
        aria-label="Info"
        className="flex size-[22px] items-center justify-center rounded-full bg-[#161616] font-serif text-[18px] leading-none font-bold text-white"
      >
        i
      </button>
      <button className="mr-[31px] ml-auto h-[34px] w-[107px] border-2 border-[#bdbdbd] bg-[#e6e6e6] leading-[28px] text-[#4a4a4a]">
        OK
      </button>
      <button className="h-[34px] w-[107px] border-2 border-[#bdbdbd] bg-[#e6e6e6] leading-[28px] text-[#4a4a4a]">
        Cancel
      </button>
    </div>
  </section>
);

/* ---------- navigation bar ---------- */

const NavIcon = ({ children }: { children: ReactNode }) => (
  <svg viewBox="0 0 28 28" className="size-7" fill="none" stroke="#6d6f72" strokeWidth="2">
    {children}
  </svg>
);

const NavBar = () => (
  <div className="mb-[2px] flex h-[43px] items-center bg-[#f0f0f0] px-[7px]">
    <button aria-label="Orbit" className="mr-[11px] flex items-center gap-[9px]">
      <NavIcon>
        <ellipse cx="14" cy="14" rx="6" ry="13" fill="#fff" strokeWidth="1" />
        <path d="M8 9C-2 11-1 18 10 19H17C30 18 29 11 20 9" strokeWidth="1" />
        <path d="M11 14H17M14 11V17" stroke="#4a82c4" />
        <path d="M16 3L20 7M20 12L24 9" stroke="#222" strokeWidth="3" />
      </NavIcon>
      <Caret />
    </button>
    <button aria-label="Look at" className="mr-[18px]">
      <NavIcon>
        <path d="M2 11H26V26H2Z" fill="#d6d7d9" />
        <path d="M7 15H22V22H7Z" fill="#a9b6c6" />
        <path d="M3 10L7 4L10 8L15 4L17 8H23" strokeWidth="3" />
      </NavIcon>
    </button>
    <button aria-label="Pan" className="mr-[18px]">
      <NavIcon>
        <path
          d="M9 26C7 21 3 18 1 15C1 12 4 13 7 17L6 6C6 4 8 4 9 6L11 13L12 3C12 1 15 1 15 3L16 13L19 4C20 2 22 3 22 5L20 15L24 9C26 8 27 10 26 12C23 18 22 23 19 26Z"
          fill="#fff"
          strokeLinejoin="round"
        />
      </NavIcon>
    </button>
    <button aria-label="Zoom" className="mr-[18px]">
      <NavIcon>
        <path d="M17 17L27 27" stroke="#2b2b2b" strokeWidth="4" />
        <circle cx="11" cy="10" r="9" fill="#f6f8fa" />
        <path d="M22 4H28M25 1V7M22 11H28" stroke="#333" />
      </NavIcon>
    </button>
    <button aria-label="Zoom window" className="mr-[10px] flex items-center gap-[10px]">
      <NavIcon>
        <path d="M1 1H27V27H1Z" strokeDasharray="4 3" strokeWidth="1" />
        <path d="M18 18L27 27" stroke="#2b2b2b" strokeWidth="4" />
        <circle cx="12" cy="12" r="10" fill="#e3edf5" />
      </NavIcon>
      <Caret />
    </button>
    <button aria-label="Display" className="mr-3 flex items-center gap-1">
      <NavIcon>
        <rect x="1" y="1" width="26" height="20" rx="3" fill="#c9cbce" />
        <path d="M5 5H23V17H5Z" fill="#68a4dc" stroke="#46709c" />
        <path d="M11 21V26H17V21M7 27H21" fill="#999" />
      </NavIcon>
      <Caret />
    </button>
    <button aria-label="Grid" className="mr-[13px] flex items-center gap-1">
      <NavIcon>
        <path d="M1 1H27V27H1Z" fill="#b4b5b7" stroke="#77797c" />
        <path d="M6 1V27M11 1V27M16 1V27M21 1V27M1 6H27M1 11H27M1 16H27M1 21H27" stroke="#808285" strokeWidth="1" />
      </NavIcon>
      <Caret />
    </button>
    <button aria-label="Viewports" className="flex items-center gap-1">
      <NavIcon>
        <rect x="1" y="3" width="26" height="23" rx="2" fill="#6297d0" stroke="#4b6e96" />
        <path d="M14 3V26M1 14H27" stroke="#35547a" />
        <path d="M6 6H11V10H6ZM18 6H23V10H18ZM18 18H23V22H18Z" fill="#7fb1e6" stroke="#8dbbe9" strokeWidth="1" />
      </NavIcon>
      <Caret />
    </button>
  </div>
);

/* ---------- timeline ---------- */

const Pattern = () => (
  <svg viewBox="0 0 30 14" className="h-[14px] w-[30px]" fill="#d6e6f8" stroke="#304a70" strokeWidth="3">
    <rect x="2" y="2" width="5" height="10" />
    <rect x="13" y="2" width="5" height="10" />
    <rect x="24" y="2" width="5" height="10" />
  </svg>
);

const SketchFeature = () => (
  <svg viewBox="0 0 28 28" className="size-7" fill="none">
    <path d="M2 2H25V26H2Z" fill="#f8f8f8" stroke="#8b98aa" strokeWidth="2" />
    <path d="M8 8H19Q19 19 8 19Z" stroke="#7096c4" strokeWidth="2" />
    <path d="M0 0H4V4H0ZM23 0H27V4H23ZM0 24H4V28H0ZM6 6H9V9H6ZM18 6H21V9H18ZM6 18H9V21H6Z" fill="#3d78c2" />
    <path d="M14 27L16 22L22 17L26 20L20 26Z" fill="#f0bc2e" stroke="#9a6f1c" strokeWidth="1" />
    <path d="M22 17L25 14L28 17L26 20Z" fill="#dc3b1f" />
  </svg>
);

const ExtrudeFeature = () => (
  <svg viewBox="0 0 28 28" className="size-7">
    <path d="M1 24L6 28H17L22 23V19H1Z" fill="#c5c7ca" stroke="#999" />
    <path d="M1 6L6 1H21L16 6Z" fill="#7cc8f5" />
    <path d="M16 6L21 1V20L16 24Z" fill="#1f84c4" />
    <path d="M1 6H16V24H1Z" fill="#3da9ea" />
    <path d="M25 3V24" stroke="#77787a" strokeWidth="2" />
    <circle cx="25" cy="3" r="2" fill="#222" />
  </svg>
);

const CombineFeature = () => (
  <svg viewBox="0 0 30 28" className="h-7 w-[30px]">
    <path d="M1 12L4 9H11V3L14 0H29V16L26 19H20V24L16 28H1Z" fill="#3ba6e8" />
    <path d="M1 12L4 9H11V3L14 0H29L26 3H14V12Z" fill="#64bdf2" />
    <path d="M26 3L29 0V16L26 19ZM17 19H20V24L16 28V19Z" fill="#1c7dbc" />
  </svg>
);

const FEATURES = ["sketch", "extrude", ...Array(6).fill("pattern"), "combine", ...Array(9).fill("pattern")];

const PLAYBACK = [
  { name: "Go to start", path: "M1 1H4V25H1ZM22 1V25L4 13Z" },
  { name: "Step back", path: "M16 2V24L0 13ZM18 8H22V18H18Z" },
  { name: "Play", path: "M1 0L22 13L1 26Z" },
  { name: "Step forward", path: "M7 2V24L23 13ZM1 8H5V18H1Z" },
  { name: "Go to end", path: "M1 1V25L19 13ZM19 1H22V25H19Z" },
];

const Timeline = () => (
  <footer className="flex h-[62px] items-center border-t-4 border-[#bfbfbf] bg-[#efefef] pt-7 pl-1">
    <div className="flex w-[232px] shrink-0 items-center gap-[21px]">
      {PLAYBACK.map(({ name, path }) => (
        <button key={name} aria-label={name}>
          <svg viewBox="0 0 23 26" className="h-[26px] w-[23px]" fill="#3f4042">
            <path d={path} />
          </svg>
        </button>
      ))}
    </div>
    <ol className="relative grid w-[763px] shrink-0 grid-cols-18 items-center justify-items-center">
      {FEATURES.map((feature, index) => (
        <li key={index}>
          {feature === "sketch" && <SketchFeature />}
          {feature === "extrude" && <ExtrudeFeature />}
          {feature === "combine" && <CombineFeature />}
          {feature === "pattern" && <Pattern />}
        </li>
      ))}
      <svg viewBox="0 0 22 44" className="absolute -right-[11px] -bottom-1 h-11 w-[22px]" fill="#525354">
        <path d="M0 0H22V7L13 17V44H10V17L0 7Z" />
      </svg>
    </ol>
    <button aria-label="Timeline settings" className="mr-2 ml-auto">
      <Cog />
    </button>
  </footer>
);

const App = () => {
  return (
    <div className="flex h-screen flex-col overflow-hidden bg-white font-['Open_Sans','Noto_Sans',sans-serif] text-[#262626]">
      <Toolbar />
      <main className="relative flex min-h-0 flex-1 flex-col justify-between">
        <Cabinet />
        <div className="flex justify-between pt-[7px]">
          <Browser />
          <div className="flex w-[433px] flex-col">
            <div className="flex h-[408px] justify-end pt-[2px] pr-[15px]">
              <ViewCube />
            </div>
            <TrimDialog />
          </div>
        </div>
        <div className="grid grid-cols-[1fr_auto_1fr] items-end pb-2">
          <div className="flex h-[43px] w-[522px] items-center border-r-2 border-b-2 border-[#c4c4c4] bg-[#efefef] pl-[37px]">
            <h2 className="text-[19px] text-[#4a4a4a]">COMMENTS</h2>
            <button aria-label="Expand comments" className="mr-[19px] ml-auto">
              <Dot sign="plus" />
            </button>
          </div>
          <NavBar />
          <p className="pr-3 text-right text-[20px] leading-[28px] font-bold">7 Component Instances</p>
        </div>
        <Pointer />
      </main>
      <Timeline />
    </div>
  );
};

export default App;
